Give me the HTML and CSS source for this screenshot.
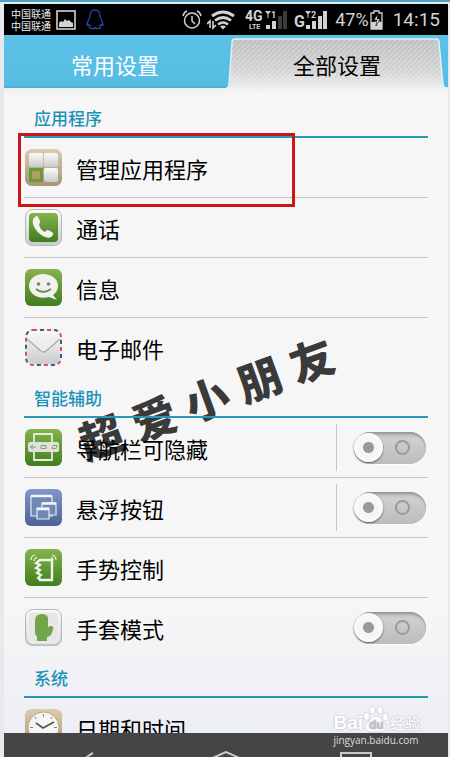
FILE: index.html
```html
<!DOCTYPE html>
<html lang="zh-CN">
<head>
    <meta charset="UTF-8">
    <meta name="viewport" content="width=device-width, initial-scale=1.0">
    <title>全部设置</title>
    <link rel="stylesheet" href="styles.css">
</head>
<body>
    <div class="phone">
        <header class="status">
            <div class="status__carriers">
                <span>中国联通</span>
                <span>中国联通</span>
            </div>
            <svg class="status__picture" width="20" height="20" viewBox="0 0 20 20">
                <rect x="1" y="1" width="18" height="18" fill="none" stroke="#d2d2d2" stroke-width="1.6"/>
                <path d="M3 17v-4l2-2 2 1 2-3 2 2 2-1 2 2 2 1v4z" fill="#d2d2d2"/>
            </svg>
            <svg class="status__qq" width="18" height="21" viewBox="0 0 18 21">
                <path d="M9 1C5.500 1 4 3.500 4 7c0 2-3 5-3 9 0 1 1.500 0 2-1 0 1 .5 2 1 2-1 1-1 2.500 1 2.500h3l1-1 1 1h3c2 0 2-1.500 1-2.500.5 0 1-1 1-2 .5 1 2 2 2 1 0-4-3-7-3-9 0-3.500-1.500-6-5-6z" fill="none" stroke="#23449a" stroke-width="1.400"/>
            </svg>
            <div class="status__right">
                <svg width="20" height="20" viewBox="0 0 20 20" fill="none" stroke="#d2d2d2" stroke-width="1.500">
                    <circle cx="10" cy="10.500" r="7.500"/>
                    <path d="M10 6v5l3 3M1 6q1-4 4-5M19 6q-1-4-4-5"/>
                </svg>
                <svg class="status__wifi" width="28" height="20" viewBox="0 0 28 20" fill="none" stroke="#d2d2d2">
                    <path d="M5 6q11-8 22 0" stroke-width="3"/>
                    <path d="M8 10.500q8-6 16 0" stroke-width="2.800"/>
                    <path d="M11 14.500q5-4 10 0" stroke-width="2.500"/>
                    <path d="M13 16.500q3-2 6 0l-3 3z" fill="#d2d2d2" stroke="none"/>
                    <path d="M3 18v-7l-3 3M6 11v7l3-3" stroke-width="1.600"/>
                </svg>
                <svg class="signal" width="42" height="22" viewBox="0 0 42 22" fill="#d2d2d2">
                    <text class="signal__net" x="0" y="12">4G</text>
                    <text class="signal__lte" x="4" y="20">LTE</text>
                    <path d="M20 2h6l-2.500 3v4h-1V5z"/>
                    <text class="signal__sim" x="26" y="9">1</text>
                    <path d="M21 16h4v4h-4zM27 12h4v8h-4z"/>
                    <path d="M33 7h4v13h-4zM38 2h4v18h-4z" fill="#3b3b3b"/>
                </svg>
                <svg class="signal" width="34" height="22" viewBox="0 0 34 22" fill="#d2d2d2">
                    <text class="signal__g" x="0" y="18">G</text>
                    <path d="M11 2h6l-2.500 3v4h-1V5z"/>
                    <text class="signal__sim" x="17" y="9">2</text>
                    <path d="M12 16h4v4h-4zM18 12h4v8h-4zM24 7h4v13h-4zM29 2h4v18h-4z"/>
                </svg>
                <span class="status__percent">47%</span>
                <svg class="status__battery" width="13" height="20" viewBox="0 0 13 20">
                    <path d="M4 3V1h5v2h3v16H1V3z" fill="none" stroke="#d2d2d2" stroke-width="1.300"/>
                    <path d="M1 12h3l3-1 5 1v7H1z" fill="#d2d2d2"/>
                    <path d="M8 4l-4 6h3l-1 6 4-7H7z" fill="#fff" stroke="#000" stroke-width=".6"/>
                </svg>
                <time class="status__time">14:15</time>
            </div>
        </header>

        <nav class="tabs">
            <button type="button" class="tab">常用设置</button>
            <button type="button" class="tab tab--active">
                <svg class="tab__shape" viewBox="0 0 220 55" preserveAspectRatio="none">
                    <defs>
                        <linearGradient id="tabFill" x1="0" y1="0" x2="0" y2="1">
                            <stop offset="0" stop-color="#bdbdbd"/>
                            <stop offset=".6" stop-color="#d3d3d3"/>
                            <stop offset="1" stop-color="#f4f4f4"/>
                        </linearGradient>
                        <pattern id="tabLines" width="5" height="5" patternUnits="userSpaceOnUse">
                            <path d="M-1 6L6-1" stroke="#fff" stroke-opacity=".3" stroke-width="1.300"/>
                        </pattern>
                    </defs>
                    <path d="M0 55V50Q3 50 3 46L6 4Q6 1 9 1H208Q211 1 211 4L215 46Q215 50 220 50V55z" fill="url(#tabFill)"/>
                    <path d="M0 55V50Q3 50 3 46L6 4Q6 1 9 1H208Q211 1 211 4L215 46Q215 50 220 50V55z" fill="url(#tabLines)"/>
                    <path d="M0 50Q3 50 3 46L6 4Q6 1 9 1H208Q211 1 211 4L215 46Q215 50 220 50" fill="none" stroke="#dff1f8" stroke-width="1.500"/>
                </svg>
                <span class="tab__text">全部设置</span>
            </button>
        </nav>

        <main class="settings">
            <div class="signature">
                <span>超</span><span>爱</span><span>小</span><span>朋</span><span>友</span>
            </div>

            <section class="group group--first">
                <h2 class="group__title">应用程序</h2>
                <a href="#" class="row row--marked">
                    <svg class="row__icon" viewBox="0 0 37 37">
                        <defs>
                            <linearGradient id="silver" x1="0" y1="0" x2="0" y2="1">
                                <stop offset="0" stop-color="#fbfbfb"/>
                                <stop offset="1" stop-color="#c9cacb"/>
                            </linearGradient>
                            <linearGradient id="green" x1="0" y1="0" x2="0" y2="1">
                                <stop offset="0" stop-color="#85b44b"/>
                                <stop offset="1" stop-color="#3f7d21"/>
                            </linearGradient>
                            <linearGradient id="sand" x1="0" y1="0" x2="0" y2="1">
                                <stop offset="0" stop-color="#dccdaf"/>
                                <stop offset="1" stop-color="#a59478"/>
                            </linearGradient>
                            <linearGradient id="blue" x1="0" y1="0" x2="0" y2="1">
                                <stop offset="0" stop-color="#8199c9"/>
                                <stop offset="1" stop-color="#4b6294"/>
                            </linearGradient>
                        </defs>
                        <rect width="37" height="37" rx="7" fill="url(#sand)"/>
                        <rect x="4" y="4" width="14" height="14" rx="2" fill="url(#silver)"/>
                        <rect x="19" y="4" width="14" height="14" rx="2" fill="url(#silver)"/>
                        <rect x="19" y="19" width="14" height="14" rx="2" fill="url(#silver)"/>
                        <rect x="5.500" y="20.500" width="11" height="11" fill="#b59b68" stroke="#669b35" stroke-width="3"/>
                    </svg>
                    <span class="row__label">管理应用程序</span>
                </a>
                <a href="#" class="row">
                    <svg class="row__icon" viewBox="0 0 37 37">
                        <rect x=".5" y=".5" width="36" height="36" rx="7" fill="url(#silver)" stroke="#b8b9ba"/>
                        <rect x="4" y="4" width="29" height="29" rx="4" fill="url(#green)"/>
                        <path d="M10 8q-3 2-2 7 3 9 12 13 6 2 8-2 1-2-1-3l-4-2q-2 0-3 2-5-2-6-8 2-1 1-3l-2-4q-1-2-3 0z" fill="#f3f3f3"/>
                    </svg>
                    <span class="row__label">通话</span>
                </a>
                <a href="#" class="row">
                    <svg class="row__icon" viewBox="0 0 37 37">
                        <rect width="37" height="37" rx="6" fill="url(#green)"/>
                        <path d="M18 5c9 0 15 5 15 12 0 4-2 7-5 9l4 5-8-3c-11 3-20-3-20-11C4 10 10 5 18 5z" fill="#f1f1ef"/>
                        <circle cx="13.500" cy="15" r="1.800" fill="#6f8b55"/>
                        <circle cx="23.500" cy="15" r="1.800" fill="#6f8b55"/>
                        <path d="M11 20q7 6 15 0" fill="none" stroke="#6f8b55" stroke-width="1.800"/>
                    </svg>
                    <span class="row__label">信息</span>
                </a>
                <a href="#" class="row">
                    <svg class="row__icon" viewBox="0 0 37 37">
                        <rect x="1" y="1" width="35" height="35" rx="7" fill="url(#silver)" stroke="#efefef" stroke-width="2"/>
                        <rect x="1" y="1" width="35" height="35" rx="7" fill="none" stroke="#cf5560" stroke-width="2" stroke-dasharray="4 10"/>
                        <rect x="1" y="1" width="35" height="35" rx="7" fill="none" stroke="#3b5b80" stroke-width="2" stroke-dasharray="4 10" stroke-dashoffset="-7"/>
                        <path d="M3 33l12-13M34 33L22 20" stroke="#d2d3d4" fill="none"/>
                        <path d="M2 10l14 12q3 2 5 0l14-12" fill="#eeeeef" stroke="#a9aaac" stroke-width="1.300"/>
                    </svg>
                    <span class="row__label">电子邮件</span>
                </a>
            </section>

            <section class="group">
                <h2 class="group__title">智能辅助</h2>
                <div class="row">
                    <svg class="row__icon" viewBox="0 0 37 37">
                        <rect width="37" height="37" rx="6" fill="url(#green)"/>
                        <path d="M9 14V5h18v9M9 23v8h18v-8" fill="none" stroke="#e3ecd8" stroke-width="1.800"/>
                        <rect x="3" y="13" width="31" height="10" rx="2" fill="#dfe2da"/>
                        <path d="M8 16l-3 2 3 2M6 18h5M16 16.500h5v3h-5zM27 19.500l1-3h4l-1 3z" fill="none" stroke="#8a9a7c"/>
                    </svg>
                    <label class="row__label" for="navbar">导航栏可隐藏</label>
                    <div class="row__control row__control--split">
                        <input type="checkbox" class="switch" id="navbar">
                    </div>
                </div>
                <div class="row">
                    <svg class="row__icon" viewBox="0 0 37 37">
                        <rect width="37" height="37" rx="6" fill="url(#blue)"/>
                        <g fill="#6f88b8" stroke="#e4e9f3" stroke-width="1.200">
                            <path d="M6 7h21v20H6z"/>
                            <path d="M17 14h14v12H17z"/>
                            <path d="M12 19h12v11H12z"/>
                        </g>
                        <path d="M6 7h21M17 14.500h14M12 20h12" stroke="#f4f6fa" stroke-width="2.500"/>
                    </svg>
                    <label class="row__label" for="float">悬浮按钮</label>
                    <div class="row__control row__control--split">
                        <input type="checkbox" class="switch" id="float">
                    </div>
                </div>
                <a href="#" class="row">
                    <svg class="row__icon" viewBox="0 0 37 37">
                        <rect width="37" height="37" rx="6" fill="url(#green)"/>
                        <g fill="none" stroke="#f0f5ea">
                            <path d="M14 11h13v20H14" stroke-width="2.400"/>
                            <path d="M15 11l-4 3 4 2-4 3 4 2-3 3 4 2-3 3 3 2" stroke-width="2.200"/>
                            <path d="M6 11q0-4 4-5M9 12q0-2 3-4M31 11q0-4-4-5M28 11q0-2-2-3" stroke-width="1.200"/>
                        </g>
                    </svg>
                    <span class="row__label">手势控制</span>
                </a>
                <div class="row">
                    <svg class="row__icon" viewBox="0 0 37 37">
                        <rect x=".5" y=".5" width="36" height="36" rx="7" fill="url(#silver)" stroke="#b8b9ba"/>
                        <rect x="3" y="3" width="31" height="31" rx="5" fill="#e6e7e8" stroke="#f6f6f6"/>
                        <path d="M10 12q0-7 7-7t6 7v7q0-2 3-2t2 3q-1 7-6 8v4H12v-4q-2-2-2-5z" fill="#72a549"/>
                    </svg>
                    <label class="row__label" for="glove">手套模式</label>
                    <div class="row__control">
                        <input type="checkbox" class="switch" id="glove">
                    </div>
                </div>
            </section>

            <section class="group">
                <h2 class="group__title">系统</h2>
                <a href="#" class="row">
                    <svg class="row__icon" viewBox="0 0 37 37">
                        <rect width="37" height="37" rx="6" fill="url(#sand)"/>
                        <circle cx="18.500" cy="18.500" r="15.500" fill="#f6f5f3" stroke="#b9a685"/>
                        <path d="M18.500 5v3M5 18.500h3M29 18.500h3M10 8l1 2M27 8l-1 2" stroke="#8b8478"/>
                        <path d="M11 14l7 5 11-6" fill="none" stroke="#57524a" stroke-width="1.600"/>
                    </svg>
                    <span class="row__label">日期和时间</span>
                </a>
            </section>
        </main>

        <footer class="softkeys">
            <button type="button" class="softkey" aria-label="返回">
                <svg width="44" height="32" viewBox="0 0 44 32"><path d="M25 2Q14 8 12 16q5 8 22 8" fill="none" stroke="#c9c9c9" stroke-width="2"/></svg>
            </button>
            <button type="button" class="softkey" aria-label="主屏幕">
                <svg width="44" height="32" viewBox="0 0 44 32"><path d="M4 9L22 1l18 8v18H4z" fill="none" stroke="#c9c9c9" stroke-width="2"/></svg>
            </button>
            <button type="button" class="softkey" aria-label="最近任务">
                <svg width="44" height="32" viewBox="0 0 44 32"><path d="M1 2h30v24H1z" fill="none" stroke="#c9c9c9" stroke-width="2"/></svg>
            </button>
        </footer>

        <div class="source">
            <div class="source__brand">
                <span class="source__bai">Bai</span>
                <svg class="source__paw" width="26" height="28" viewBox="0 0 26 28" fill="#fff" stroke="#cfcfd6" stroke-width=".8">
                    <ellipse cx="3.500" cy="11.500" rx="3" ry="4"/>
                    <ellipse cx="9.500" cy="5" rx="3" ry="4"/>
                    <ellipse cx="17" cy="5" rx="3" ry="4"/>
                    <ellipse cx="22.500" cy="12" rx="3" ry="4"/>
                    <path d="M13 11c4 0 5 4 8 7 4 4 1 9-3 9H8c-5 0-8-5-4-9 4-3 5-7 9-7z"/>
                    <text class="source__du" x="6" y="24">du</text>
                </svg>
                <span class="source__exp">经验</span>
            </div>
            <span class="source__url">jingyan.baidu.com</span>
        </div>
    </div>
</body>
</html>
```
FILE: styles.css
```css
*, *::before, *::after {
    box-sizing: border-box;
}
body {
    margin: 0;
    height: 100vh;
    padding: 2px 2px 0 4px;
    border-top: 2px solid #4aa5c5;
    background: #e8e9ea;
    color: #000;
    font-family: "Noto Sans CJK SC", sans-serif;
    overflow: hidden;
}
button {
    border: none;
    padding: 0;
    background: none;
    color: inherit;
    font: inherit;
    cursor: pointer;
}
.phone {
    position: relative;
    display: flex;
    flex-direction: column;
    height: 100%;
    background: linear-gradient(#f6f6f6 80%, #ebedf6);
}

/* status bar */
.status {
    display: flex;
    flex: none;
    align-items: center;
    height: 31px;
    padding: 0 8px 0 7px;
    background: #000;
    color: #d2d2d2;
}
.status__carriers {
    display: flex;
    flex-direction: column;
    font-size: 10px;
    line-height: 12px;
    font-weight: 500;
}
.status__picture {
    margin-left: 5px;
}
.status__qq {
    margin-left: 10px;
}
.status__right {
    display: flex;
    align-items: center;
    margin-left: auto;
    font-family: Roboto, sans-serif;
}
.status__wifi {
    margin: 0 10px 0 5px;
}
.signal {
    margin-right: 7px;
    font-family: Roboto, sans-serif;
    font-weight: bold;
}
.signal__net {
    font-size: 14px;
}
.signal__g {
    font-size: 16px;
}
.signal__lte {
    font-size: 7px;
}
.signal__sim {
    font-size: 9px;
}
.status__percent {
    font-size: 18px;
}
.status__battery {
    margin: 0 10px 0 1px;
}
.status__time {
    font-size: 19px;
}

/* tabs */
.tabs {
    display: flex;
    flex: none;
    height: 58px;
    border-bottom: 5px solid #f1f1f1;
    background: linear-gradient(#5cc2e6, #56bce3 50px, #4aa9cf);
    background-clip: padding-box;
}
.tab {
    flex: 1;
    height: 58px;
    color: #fff;
    font-size: 22px;
}
.tab--active {
    position: relative;
    color: #000;
}
.tab__shape {
    position: absolute;
    left: 0;
    top: 3px;
    width: 100%;
    height: 55px;
}
.tab__text {
    position: relative;
}

/* settings list */
.settings {
    position: relative;
    isolation: isolate;
    flex: 1;
    min-height: 0;
    padding: 0 20px;
    overflow: hidden;
}
.group__title {
    margin: 0;
    height: 40px;
    padding: 3px 0 0 10px;
    border-bottom: 2px solid #2a96b8;
    color: #1a93b8;
    font-size: 17px;
    font-weight: 500;
    line-height: 34px;
}
.group--first {
    padding-top: 5px;
}
.row {
    display: flex;
    align-items: center;
    height: 60px;
    padding-left: 1px;
    border-bottom: 1px solid #c6c6c6;
    color: inherit;
    text-decoration: none;
}
.row:last-child {
    border-bottom-color: transparent;
}
.row__icon {
    width: 37px;
    height: 37px;
    margin-right: 14px;
}
.row__label {
    font-size: 22px;
    line-height: 32px;
}
.row__control {
    display: flex;
    align-items: center;
    height: 47px;
    margin-left: auto;
    padding: 0 2px 0 17px;
}
.row__control--split {
    border-left: 1px solid #c6c6c6;
}
.row--marked {
    position: relative;
}
.row--marked::after {
    content: "";
    position: absolute;
    left: -6px;
    top: -5px;
    width: 277px;
    height: 74px;
    border: 3px solid #cb1518;
}

.switch {
    appearance: none;
    display: flex;
    align-items: center;
    justify-content: space-between;
    width: 72px;
    height: 32px;
    margin: 0;
    padding-right: 16px;
    border-radius: 16px;
    background: linear-gradient(#b4b4b4, #cfcfcf 20%, #bcbcbc);
    box-shadow: inset 0 2px 2px #999, 0 1px 1px #fff;
    cursor: pointer;
}
.switch::before {
    content: "";
    width: 29px;
    height: 29px;
    border-radius: 50%;
    background: radial-gradient(circle, #999 5px, #f4f4f4 6px, #fff);
    box-shadow: 0 1px 2px #555;
}
.switch::after {
    content: "";
    width: 15px;
    height: 15px;
    border: 2px solid #9a9a9a;
    border-radius: 50%;
}
.switch:checked {
    flex-direction: row-reverse;
    padding: 0 0 0 16px;
}

/* slanted signature behind the list */
.signature {
    position: absolute;
    z-index: -1;
    left: 68px;
    top: 269px;
    display: flex;
    gap: 12px;
    color: #3a3a3a;
    font-size: 44px;
    font-weight: 900;
    line-height: 70px;
    transform: rotate(-20deg);
}

/* bottom keys */
.softkeys {
    display: flex;
    flex: none;
    justify-content: space-between;
    height: 24px;
    padding: 18px 64px 0;
    background: #454545;
    overflow: hidden;
}
.softkey {
    height: 32px;
}

.source {
    position: absolute;
    right: 28px;
    bottom: 10px;
    color: #fff;
    line-height: 14px;
}
.source__brand {
    display: flex;
    align-items: flex-end;
    text-shadow: 0 0 2px #a5a5b0;
}
.source__bai {
    font: bold 19px/20px "Liberation Sans", sans-serif;
}
.source__du {
    fill: #c0c0ca;
    stroke: none;
    font: bold 12px "Liberation Sans", sans-serif;
}
.source__exp {
    margin-left: 1px;
    font-size: 15px;
    font-weight: 500;
    line-height: 20px;
}
.source__url {
    display: block;
    color: #dedede;
    font-family: "Open Sans", sans-serif;
    font-size: 10px;
}
```
